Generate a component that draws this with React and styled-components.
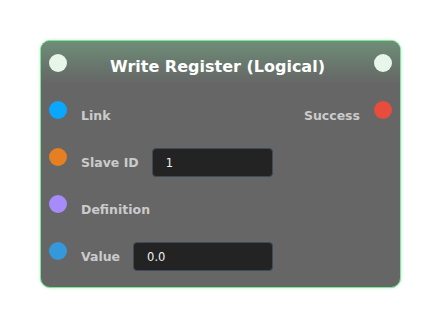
import styled, { createGlobalStyle } from "styled-components";

const GlobalStyle = createGlobalStyle`
  body {
    margin: 0;
    background: #ffffff;
    font-family: "DejaVu Sans", Verdana, sans-serif;
  }
`;

const Page = styled.div`
  padding: 40px;
`;

const Node = styled.div`
  width: 361px;
  box-sizing: border-box;
  background: #666666;
  border: 1px solid #80e59a;
  border-radius: 10px;
  box-shadow: 0 0 3px rgba(120, 230, 150, 0.55);
  overflow: hidden;
`;

const Header = styled.div`
  display: flex;
  align-items: center;
  justify-content: space-between;
  height: 44px;
  padding: 0 8px;
  background: linear-gradient(to bottom, #6f8e78 0%, #68746c 60%, #666666 100%);
`;

const Title = styled.div`
  flex: 1;
  text-align: center;
  margin: 8px 6px 0 0;
  line-height: 20px;
  color: #ffffff;
  font-size: 16px;
  font-weight: bold;
`;

const Dot = styled.span`
  flex: none;
  display: block;
  width: 18px;
  height: 18px;
  border-radius: 50%;
  background: ${(p) => p.$color};
`;

const Body = styled.div`
  display: flex;
  flex-direction: column;
  gap: 18px;
  padding: 16px 8px 16px 8px;
`;

const Row = styled.div`
  display: flex;
  align-items: flex-start;
  height: 29px;
`;

const Field = styled.div`
  display: flex;
  align-items: center;
  width: 192px;
  height: 29px;
  margin-left: 14px;
`;

const Label = styled.span`
  color: #cbcbcb;
  font-size: 12.5px;
  font-weight: bold;
  white-space: nowrap;
`;

const Output = styled.div`
  display: flex;
  align-items: flex-start;
  gap: 14px;
  margin-left: auto;
  height: 29px;

  ${Label} {
    line-height: 29px;
  }
`;

const Input = styled.div`
  flex: 1;
  box-sizing: border-box;
  height: 29px;
  margin-left: 13px;
  padding: 0 13px;
  display: flex;
  align-items: center;
  background: #232323;
  border: 1px solid #3e4b5d;
  border-radius: 4px;
  color: #f2f2f2;
  font-size: 11.5px;
`;

const inputs = [
  { label: "Link", color: "#0aa7ff" },
  { label: "Slave ID", color: "#e67e22", value: "1" },
  { label: "Definition", color: "#a78bfa" },
  { label: "Value", color: "#3498db", value: "0.0" },
];

export default function App() {
  return (
    <Page>
      <GlobalStyle />
      <Node>
        <Header>
          <Dot $color="#e8f5e9" />
          <Title>Write Register (Logical)</Title>
          <Dot $color="#e8f5e9" />
        </Header>
        <Body>
          {inputs.map((item, i) => (
            <Row key={item.label}>
              <Dot $color={item.color} />
              <Field>
                <Label>{item.label}</Label>
                {item.value !== undefined && <Input>{item.value}</Input>}
              </Field>
              {i === 0 && (
                <Output>
                  <Label>Success</Label>
                  <Dot $color="#e74c3c" />
                </Output>
              )}
            </Row>
          ))}
        </Body>
      </Node>
    </Page>
  );
}
